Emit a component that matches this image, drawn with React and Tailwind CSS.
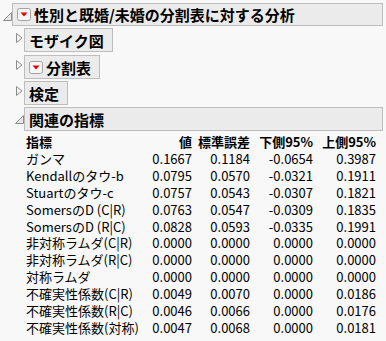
import React from "react";

// 関連の指標 table rows
const rows = [
  ["ガンマ", "0.1667", "0.1184", "-0.0654", "0.3987"],
  ["Kendallのタウ-b", "0.0795", "0.0570", "-0.0321", "0.1911"],
  ["Stuartのタウ-c", "0.0757", "0.0543", "-0.0307", "0.1821"],
  ["SomersのD (C|R)", "0.0763", "0.0547", "-0.0309", "0.1835"],
  ["SomersのD (R|C)", "0.0828", "0.0593", "-0.0335", "0.1991"],
  ["非対称ラムダ(C|R)", "0.0000", "0.0000", "0.0000", "0.0000"],
  ["非対称ラムダ(R|C)", "0.0000", "0.0000", "0.0000", "0.0000"],
  ["対称ラムダ", "0.0000", "0.0000", "0.0000", "0.0000"],
  ["不確実性係数(C|R)", "0.0049", "0.0070", "0.0000", "0.0186"],
  ["不確実性係数(R|C)", "0.0046", "0.0066", "0.0000", "0.0176"],
  ["不確実性係数(対称)", "0.0047", "0.0068", "0.0000", "0.0181"],
];

const OpenTri = () => (
  <svg width="9" height="9" viewBox="0 0 9 9">
    <polygon points="8.5,0.5 8.5,8.5 0.5,8.5" fill="#e8e8e8" stroke="#8c8c8c" strokeWidth="1" />
  </svg>
);

const ClosedTri = () => (
  <svg width="7" height="10" viewBox="0 0 7 10">
    <polygon points="0.5,0.5 6,5 0.5,9.5" fill="#f4f4f4" stroke="#8c8c8c" strokeWidth="1" />
  </svg>
);

const RedMenu = () => (
  <svg width="14" height="13" viewBox="0 0 14 13" className="shrink-0">
    <rect x="0.5" y="0.5" width="13" height="12" rx="2" fill="#f6f6f6" stroke="#a3a3a3" />
    <polygon points="3.5,4.5 10.5,4.5 7,8.5" fill="#e00000" />
  </svg>
);

const Header = ({ open, menu, title, className }) => (
  <div className={"flex items-center " + className}>
    <div className="w-[10px] flex justify-center items-center -mt-[5px]">
      {open ? <OpenTri /> : <ClosedTri />}
    </div>
    <div className="h-full flex items-center gap-[3px] bg-[#ebebeb] border border-[#bdbdbd] pl-[4px] pr-[8px] text-[15px] font-bold text-black leading-none">
      {menu && <RedMenu />}
      <span>{title}</span>
    </div>
  </div>
);

export default function App() {
  return (
    <div className="w-[386px] h-[341px] bg-[#f8f8f8] pt-[3px] pl-[2px] pr-[3px] overflow-hidden font-['Noto_Sans_CJK_JP','Noto_Sans',sans-serif] text-black">
      <div className="flex items-center h-[23px]">
        <div className="w-[10px] flex justify-center mt-[4px]">
          <OpenTri />
        </div>
        <div className="flex-1 h-full flex items-center gap-[3px] bg-[#ebebeb] border border-[#bdbdbd] pl-[4px] text-[15px] font-bold leading-none">
          <RedMenu />
          <span>性別と既婚/未婚の分割表に対する分析</span>
        </div>
      </div>

      <div className="pl-[12px]">
        <Header title="モザイク図" className="h-[24px] mt-[2px]" />
        <Header title="分割表" menu className="h-[24px] mt-[3px]" />
        <Header title="検定" className="h-[24px] mt-[2px]" />

        <div className="flex items-center h-[24px] mt-[2px]">
          <div className="w-[10px] flex justify-center">
            <OpenTri />
          </div>
          <div className="flex-1 h-full flex items-center bg-[#ebebeb] border border-[#bdbdbd] pl-[4px] text-[15px] font-bold leading-none">
            関連の指標
          </div>
        </div>

        <div className="pl-[12px] pt-[1px] text-[13px] leading-none">
          <div className="grid grid-cols-[126px_40px_58px_63px_63px] h-[18px] items-center font-bold">
            <span>指標</span>
            <span className="text-right">値</span>
            <span className="text-right">標準誤差</span>
            <span className="text-right">下側95%</span>
            <span className="text-right">上側95%</span>
          </div>
          {rows.map((r) => (
            <div key={r[0]} className="grid grid-cols-[126px_40px_58px_63px_63px] h-[16.9px] items-center">
              <span className="whitespace-nowrap">{r[0]}</span>
              <span className="text-right">{r[1]}</span>
              <span className="text-right">{r[2]}</span>
              <span className="text-right">{r[3]}</span>
              <span className="text-right">{r[4]}</span>
            </div>
          ))}
        </div>
      </div>
    </div>
  );
}
